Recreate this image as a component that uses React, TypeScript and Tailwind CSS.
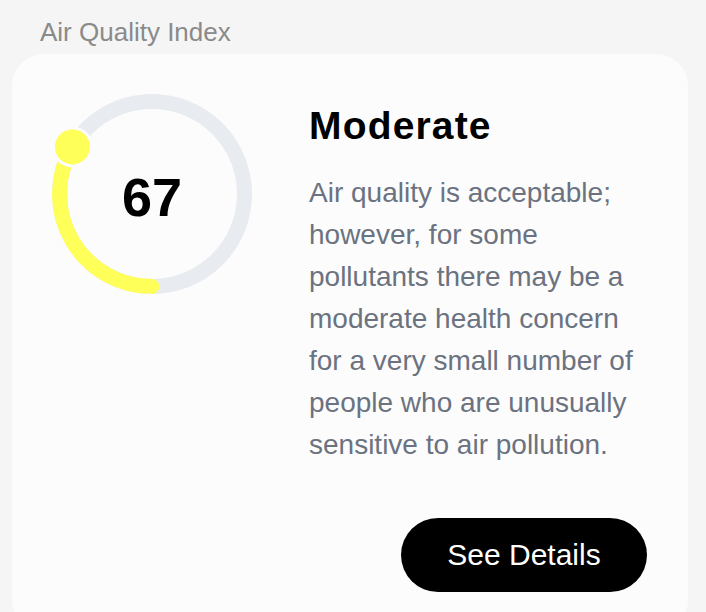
import React from "react";

const R = 92.5;
const frac = 67 / 200;
const startA = Math.PI / 2;
const endA = startA + frac * 2 * Math.PI;
const sx = 100 + R * Math.cos(startA);
const sy = 100 + R * Math.sin(startA);
const ex = 100 + R * Math.cos(endA);
const ey = 100 + R * Math.sin(endA);

function Ring() {
  return (
    <div className="relative w-[200px] h-[200px] shrink-0">
      <svg width="200" height="200" viewBox="0 0 200 200" className="block">
        <circle cx="100" cy="100" r={R} fill="none" stroke="#e8ebf0" strokeWidth="15" />
        <path
          d={`M ${sx} ${sy} A ${R} ${R} 0 0 1 ${ex} ${ey}`}
          fill="none"
          stroke="#ffff5a"
          strokeWidth="15"
          strokeLinecap="round"
        />
        <circle cx={ex} cy={ey} r="20.5" fill="#fcfcfc" />
        <circle cx={ex} cy={ey} r="17.5" fill="#ffff5a" />
      </svg>
      <div className="absolute inset-0 flex items-center justify-center pt-[6px]">
        <span className="text-[54px] font-bold text-black leading-none">67</span>
      </div>
    </div>
  );
}

export default function App() {
  return (
    <div
      className="min-h-[612px] w-[706px] bg-[#f5f5f5] overflow-hidden"
      style={{ fontFamily: '"Liberation Sans", Arial, sans-serif' }}
    >
      <div className="pt-[16px] pl-[40px] text-[26px] leading-[32px] text-[#8a8a8a]">
        Air Quality Index
      </div>
      <div className="mt-[6px] ml-[12px] w-[676px] rounded-[32px] bg-[#fcfcfc] pt-[40px] pl-[40px] pr-[41px] pb-[40px] flex gap-[57px]">
        <Ring />
        <div className="w-[338px] pt-[10px] flex flex-col">
          <h2 className="text-[39px] font-bold leading-[40px] text-black tracking-[0.03em] mt-[2px] -mb-[2px]">Moderate</h2>
          <p className="mt-[28px] text-[28px] leading-[42px] text-[#6b7280]">
            Air quality is acceptable; however, for some pollutants there may be a moderate health
            concern for a very small number of people who are unusually sensitive to air pollution.
          </p>
          <div className="mt-[52px] flex justify-end">
            <button className="w-[246px] h-[74px] rounded-full bg-black text-white text-[30px] leading-none">
              See Details
            </button>
          </div>
        </div>
      </div>
    </div>
  );
}
